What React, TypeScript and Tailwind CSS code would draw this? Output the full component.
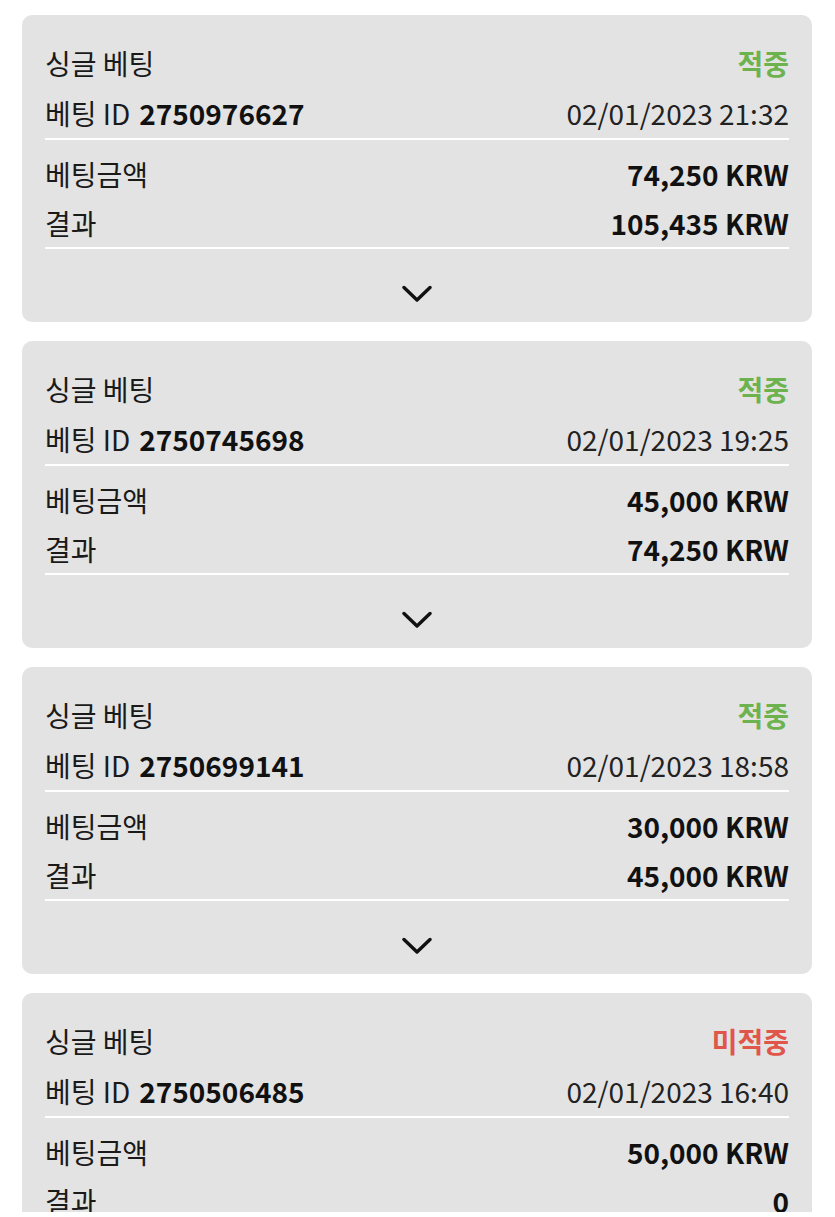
import React from "react";

type Bet = {
  id: string;
  date: string;
  status: "win" | "lose";
  stake: string;
  result: string;
};

const bets: Bet[] = [
  { id: "2750976627", date: "02/01/2023 21:32", status: "win", stake: "74,250 KRW", result: "105,435 KRW" },
  { id: "2750745698", date: "02/01/2023 19:25", status: "win", stake: "45,000 KRW", result: "74,250 KRW" },
  { id: "2750699141", date: "02/01/2023 18:58", status: "win", stake: "30,000 KRW", result: "45,000 KRW" },
  { id: "2750506485", date: "02/01/2023 16:40", status: "lose", stake: "50,000 KRW", result: "0" },
];

function Chevron() {
  return (
    <svg width="30" height="18" viewBox="0 0 30 18" fill="none">
      <path d="M2 2.5 L15 15 L28 2.5" stroke="#111" strokeWidth="3.4" strokeLinecap="round" strokeLinejoin="round" />
    </svg>
  );
}

function Card({ bet }: { bet: Bet }) {
  return (
    <div className="rounded-[10px] bg-[#e3e3e3] px-[23px] pt-[23px] pb-[19px]">
      <div className="flex h-[50px] items-center justify-between">
        <span className="text-[#1a1a1a]">싱글 베팅</span>
        {bet.status === "win" ? (
          <span className="font-bold text-[#6cb34f]">적중</span>
        ) : (
          <span className="font-bold text-[#e0564a]">미적중</span>
        )}
      </div>
      <div className="flex h-[50px] items-center justify-between">
        <span className="text-[#1a1a1a]">
          베팅 ID<span className="ml-[9px] font-bold text-[#111]">{bet.id}</span>
        </span>
        <span className="text-[#222]">{bet.date}</span>
      </div>
      <div className="h-[2px] bg-white" />
      <div className="pt-[9px]">
        <div className="flex h-[49px] items-center justify-between">
          <span className="text-[#1a1a1a]">베팅금액</span>
          <span className="font-bold text-[#111]">{bet.stake}</span>
        </div>
        <div className="flex h-[49px] items-center justify-between">
          <span className="text-[#1a1a1a]">결과</span>
          <span className="font-bold text-[#111]">{bet.result}</span>
        </div>
      </div>
      <div className="h-[2px] bg-white" />
      <div className="flex justify-center pt-[36px]">
        <Chevron />
      </div>
    </div>
  );
}

export default function App() {
  return (
    <div
      className="h-[1217px] w-full bg-white"
      style={{ fontFamily: '"Noto Sans CJK KR", "Noto Sans", sans-serif' }}
    >
      <div className="h-[1212px] overflow-hidden px-[22px] pt-[15px] pr-[23px]">
        <div className="flex flex-col gap-[19px] text-[28px] leading-none">
          {bets.map((b) => (
            <Card key={b.id} bet={b} />
          ))}
        </div>
      </div>
    </div>
  );
}
